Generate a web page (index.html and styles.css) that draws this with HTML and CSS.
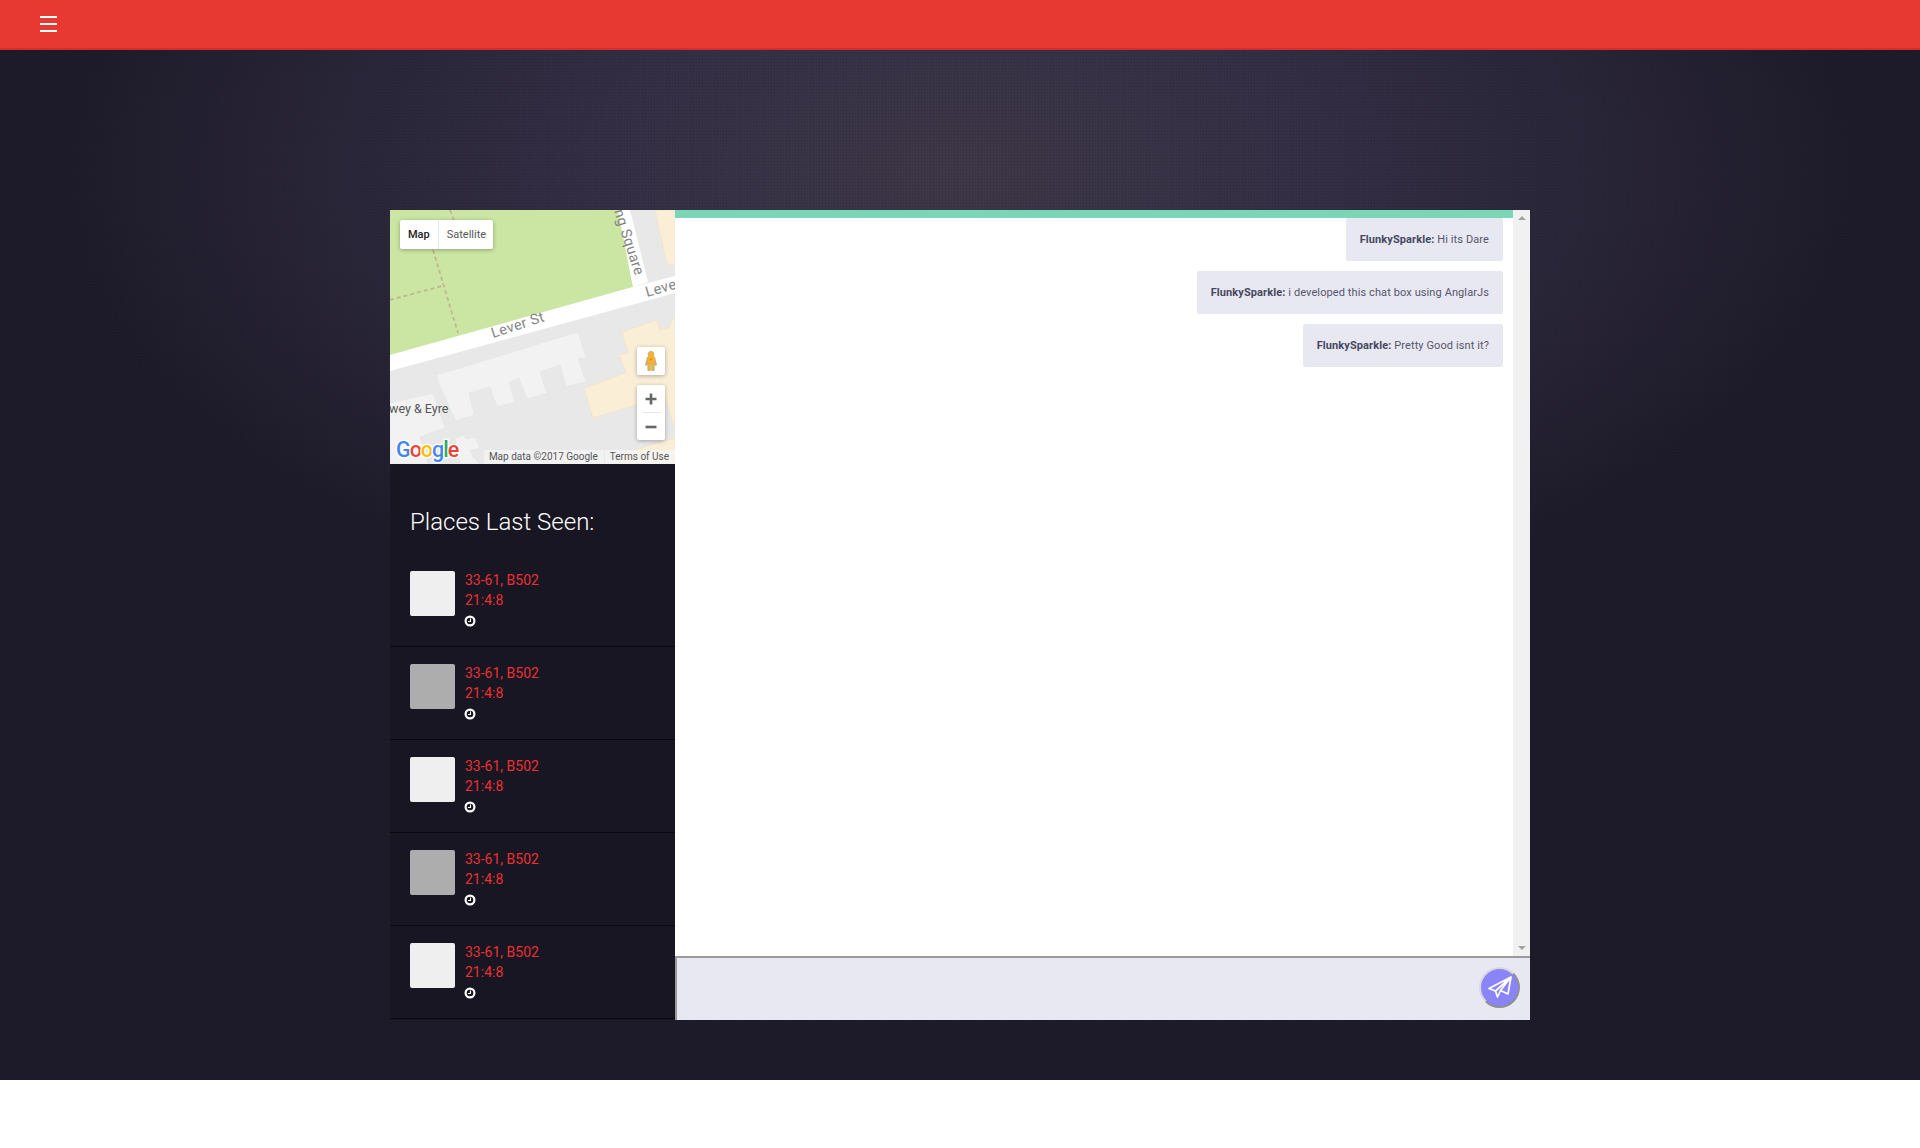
FILE: index.html
```html
<!DOCTYPE html>
<html lang="en">
<head>
<meta charset="utf-8">
<title>Chat</title>
<link rel="stylesheet" href="styles.css">
</head>
<body>
<header class="topbar">
  <button class="menu" aria-label="Menu"><span></span><span></span><span></span></button>
</header>
<main class="stage">
  <section class="card">
    <aside class="side">
      <div class="map">
        <svg class="map-art" width="285" height="254" viewBox="0 0 285 254">
          <rect width="285" height="254" fill="#e8e8e8"/>
          <polygon points="0,0 228,0 243,77 0,145" fill="#cbe6a3"/>
          <polygon class="beige" points="265,0 285,0 285,55 277,54"/>
          <polygon points="0,145 243,77 285,66 285,83 0,161" fill="#fff"/>
          <polygon points="228,0 240,0 258,72 243,77" fill="#fff"/>
          <polygon class="beige" points="232,122 267,110 270,120 280,117 282,110 285,109 285,220 275,186 203,208 194,178 236,163 229,145 238,143"/>
          <polygon class="beige" points="228,245 285,228 285,254 232,254"/>
          <polygon class="bld" points="47,165 188,122 196,147 188,149 196,172 176,176 170,155 150,162 157,183 137,189 129,168 119,172 125,192 107,197 100,177 79,183 84,205 66,211 48,172"/>
          <polygon class="bld" points="0,193 43,183 55,218 30,227 35,243 38,254 0,254"/>
          <polygon class="bld" points="65,228 73,225 76,229 85,227 90,238 80,240 83,247 90,254 70,254"/>
          <path class="dash" d="M60 0 66 16M43 40 68 123M0 90 52 76"/>
          <text class="road" transform="translate(103 128) rotate(-18)">Lever St</text>
          <text class="road" transform="translate(257 87) rotate(-16)">Leve</text>
          <text class="road" transform="translate(224 1) rotate(72)">ng Square</text>
          <text class="place" x="-1" y="203">wey &amp; Eyre</text>
          <text class="logo" x="6" y="247"><tspan fill="#4285f4">G</tspan><tspan fill="#ea4335">o</tspan><tspan fill="#fbbc05">o</tspan><tspan fill="#4285f4">g</tspan><tspan fill="#34a853">l</tspan><tspan fill="#ea4335">e</tspan></text>
        </svg>
        <div class="map-type"><span class="on">Map</span><span>Satellite</span></div>
        <div class="pegman">
          <svg width="14" height="22" viewBox="0 0 14 22"><path d="M7 1.200a3 3 0 0 1 2.200 5L10.600 7 12.600 15l-1.400.4-1-3.600V20.500H7.600V14H6.400v6.500H3.800V11.800l-1 3.600L1.400 15 3.400 7 4.800 6.200A3 3 0 0 1 7 1.200Z" fill="#f7b32b" stroke="#a89f88" stroke-width=".6"/><path d="M7 7.500 6 9.500 7 11 8 9.500Z" fill="#e8791a"/></svg>
        </div>
        <div class="zoom">
          <span class="zoom-btn"><svg width="12" height="12" viewBox="0 0 12 12"><path d="M6 .5v11M.5 6h11" stroke="#666" stroke-width="2.600"/></svg></span>
          <i></i>
          <span class="zoom-btn"><svg width="12" height="12" viewBox="0 0 12 12"><path d="M.5 6h11" stroke="#666" stroke-width="2.600"/></svg></span>
        </div>
        <div class="attrib"><span>Map data ©2017 Google</span><span>Terms of Use</span></div>
      </div>
      <div class="places">
        <h2>Places Last Seen:</h2>
        <ul>
          <li class="place-row">
            <div class="thumb"></div>
            <div class="info"><p>33-61, B502</p><p>21:4:8</p><svg class="clock" width="12" height="12" viewBox="0 0 12 12"><circle cx="6" cy="6" r="4.400" fill="none" stroke="#fff" stroke-width="2.200"/><path d="M6.500 3.500V6.500H4" fill="none" stroke="#fff" stroke-width="1.100"/></svg></div>
          </li>
          <li class="place-row">
            <div class="thumb alt"></div>
            <div class="info"><p>33-61, B502</p><p>21:4:8</p><svg class="clock" width="12" height="12" viewBox="0 0 12 12"><circle cx="6" cy="6" r="4.400" fill="none" stroke="#fff" stroke-width="2.200"/><path d="M6.500 3.500V6.500H4" fill="none" stroke="#fff" stroke-width="1.100"/></svg></div>
          </li>
          <li class="place-row">
            <div class="thumb"></div>
            <div class="info"><p>33-61, B502</p><p>21:4:8</p><svg class="clock" width="12" height="12" viewBox="0 0 12 12"><circle cx="6" cy="6" r="4.400" fill="none" stroke="#fff" stroke-width="2.200"/><path d="M6.500 3.500V6.500H4" fill="none" stroke="#fff" stroke-width="1.100"/></svg></div>
          </li>
          <li class="place-row">
            <div class="thumb alt"></div>
            <div class="info"><p>33-61, B502</p><p>21:4:8</p><svg class="clock" width="12" height="12" viewBox="0 0 12 12"><circle cx="6" cy="6" r="4.400" fill="none" stroke="#fff" stroke-width="2.200"/><path d="M6.500 3.500V6.500H4" fill="none" stroke="#fff" stroke-width="1.100"/></svg></div>
          </li>
          <li class="place-row">
            <div class="thumb"></div>
            <div class="info"><p>33-61, B502</p><p>21:4:8</p><svg class="clock" width="12" height="12" viewBox="0 0 12 12"><circle cx="6" cy="6" r="4.400" fill="none" stroke="#fff" stroke-width="2.200"/><path d="M6.500 3.500V6.500H4" fill="none" stroke="#fff" stroke-width="1.100"/></svg></div>
          </li>
        </ul>
      </div>
    </aside>
    <div class="chat">
      <div class="chat-top">
        <div class="messages">
          <div class="accent"></div>
          <div class="msg-list">
            <div class="msg"><b>FlunkySparkle:</b> Hi its Dare</div>
            <div class="msg"><b>FlunkySparkle:</b> i developed this chat box using AnglarJs</div>
            <div class="msg"><b>FlunkySparkle:</b> Pretty Good isnt it?</div>
          </div>
        </div>
        <div class="scrollbar"><span class="arrow up"></span><span class="arrow down"></span></div>
      </div>
      <div class="composer">
        <button class="send" aria-label="Send">
          <svg width="24" height="22" viewBox="0 0 24 22"><path d="M23 1 1 12.500l6.500 2.500L23 1l-3 17-7.500-3.500L9.500 21 7.500 15M12.500 14.500 23 1" fill="none" stroke="#fff" stroke-width="1.700" stroke-linejoin="round"/></svg>
        </button>
      </div>
    </div>
  </section>
</main>
</body>
</html>
```
FILE: styles.css
```css
* { box-sizing: border-box; }
html, body { margin: 0; padding: 0; background: #fff; }
body { font-family: Roboto, "Liberation Sans", sans-serif; height: 1148px; }
p, h2, ul { margin: 0; padding: 0; }
ul { list-style: none; }

.topbar {
  height: 50px;
  background: #e73932;
  border-bottom: 2px solid #d92c28;
  display: flex;
  align-items: flex-start;
  padding: 16px 0 0 40px;
}
.menu {
  width: 17px; height: 16px; padding: 0; border: 0; background: none;
  display: flex; flex-direction: column; justify-content: space-between;
}
.menu span { display: block; height: 2px; background: #fff; }

.stage {
  height: 1030px;
  padding: 160px 390px 0;
  background:
    repeating-linear-gradient(90deg, rgba(0,0,0,.05) 0 1px, transparent 1px 3px),
    repeating-linear-gradient(0deg, rgba(0,0,0,.04) 0 1px, transparent 1px 3px),
    radial-gradient(ellipse 900px 470px at 960px 120px, #3e3848 0%, #342f45 40%, #2a2639 70%, #1e1b2a 100%),
    #1e1b2a;
}
.card { display: flex; height: 810px; width: 1140px; }

.side { width: 285px; flex: none; background: #181623; display: flex; flex-direction: column; }
.map { position: relative; width: 285px; height: 254px; overflow: hidden; flex: none; }
.map-art { display: block; }
.beige { fill: #faeed7; stroke: #f3e2c3; stroke-width: .7; }
.bld { fill: #f2f2f2; stroke: #e2e2e2; stroke-width: .5; }
.dash { fill: none; stroke: #bfb690; stroke-width: 1.800; stroke-dasharray: 4 3; }
.road { font-size: 14.500px; fill: #858585; font-family: Roboto, sans-serif; letter-spacing: .4px; }
.place { font-size: 12.500px; fill: #555; font-family: Roboto, sans-serif; }
.logo { font-family: Roboto, sans-serif; font-size: 21.500px; font-weight: 500; stroke: #fff; stroke-width: 2.500px; paint-order: stroke; letter-spacing: -1px; }

.map-type {
  position: absolute; left: 10px; top: 10px; height: 29px;
  display: flex; background: #fff; border-radius: 2px;
  box-shadow: 0 1px 4px rgba(0,0,0,.3);
  font-size: 11px; color: #565656;
}
.map-type span { display: flex; align-items: center; padding: 0 8px; }
.map-type .on { color: #222; font-weight: 500; border-right: 1px solid #e6e6e6; }
.map-type span:last-child { padding: 0 7px 0 8px; }

.pegman, .zoom {
  position: absolute; left: 247px; width: 28px; background: #fff; border-radius: 2px;
  box-shadow: 0 1px 4px rgba(0,0,0,.3);
}
.pegman { top: 137px; height: 28px; display: flex; align-items: center; justify-content: center; }
.zoom { top: 175px; height: 55px; display: flex; flex-direction: column; align-items: center; }
.zoom-btn { height: 27px; display: flex; align-items: center; justify-content: center; }
.zoom i { display: block; width: 19px; height: 1px; background: #e6e6e6; }

.attrib {
  position: absolute; right: 0; bottom: 0; height: 14px;
  display: flex; gap: 1px; font-size: 10px; color: #555;
}
.attrib span { background: rgba(245,245,245,.75); padding: 0 6px 0 5px; line-height: 14px; white-space: nowrap; }

.places { flex: 1; }
.places h2 {
  font-size: 24px; font-weight: 300; color: #fff; line-height: 28px;
  padding: 44px 20px 0;
  height: 90px;
}
.place-row {
  height: 93px; padding: 17px 20px 0; display: flex; gap: 10px;
  border-bottom: 1px solid #0b0a10;
}
.thumb { width: 45px; height: 45px; background: #efefef; border-radius: 2px; flex: none; }
.thumb.alt { background: #adadad; }
.info { color: #ea3030; font-size: 14px; line-height: 20px; margin-top: -1px; }
.clock { display: block; margin: 5px 0 0 -1px; }

.chat { flex: 1; display: flex; flex-direction: column; min-width: 0; }
.chat-top { flex: 1; display: flex; min-height: 0; background: #fff; }
.messages { flex: 1; }
.accent { height: 8px; background: #7ad6b6; }
.msg-list { display: flex; flex-direction: column; align-items: flex-end; gap: 10px; padding-right: 10px; }
.msg {
  height: 43px; line-height: 43px; padding: 0 14px;
  background: #e8e8f3; border-radius: 2px;
  font-size: 11px; color: #55566a;
  letter-spacing: .1px;
}
.msg b { font-weight: 700; color: #47485f; }
.scrollbar {
  width: 17px; background: #f1f1f1; display: flex; flex-direction: column;
  justify-content: space-between; align-items: center; padding: 6px 0;
}
.arrow { width: 0; height: 0; border-left: 4px solid transparent; border-right: 4px solid transparent; }
.arrow.up { border-bottom: 4px solid #a3a3a3; }
.arrow.down { border-top: 4px solid #a3a3a3; }
.composer {
  height: 64px; flex: none; background: #e8e8f3;
  border-top: 2px solid #9a9a9a; border-left: 2px solid #9a9a9a;
  display: flex; justify-content: flex-end; align-items: center; padding: 0 10px 4px 0;
}
.send {
  width: 41px; height: 41px; border-radius: 50%; padding: 0;
  background: #8a84f9; border: 2px solid; border-color: #d8d8de #8f8f97 #8f8f97 #d8d8de;
  display: flex; align-items: center; justify-content: center;
}
```
